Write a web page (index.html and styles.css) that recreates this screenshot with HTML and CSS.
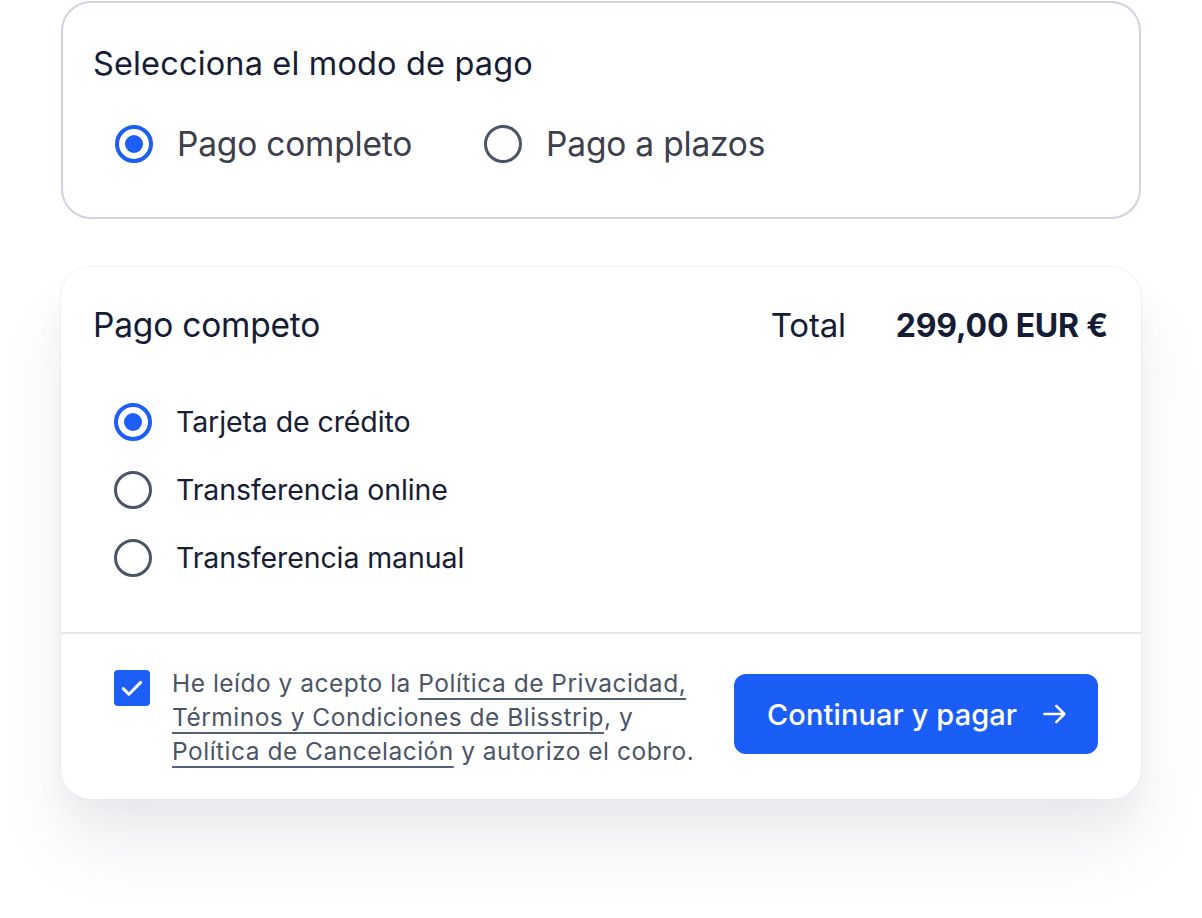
FILE: index.html
```html
<!DOCTYPE html>
<html lang="es">
<head>
<meta charset="utf-8">
<link rel="stylesheet" href="styles.css">
</head>
<body>
<div class="page">
  <section class="mode-card">
    <h2 class="mode-title">Selecciona el modo de pago</h2>
    <div class="mode-options">
      <label class="opt"><span class="radio checked"></span><span class="opt-label">Pago completo</span></label>
      <label class="opt"><span class="radio"></span><span class="opt-label">Pago a plazos</span></label>
    </div>
  </section>

  <section class="pay-card">
    <div class="pay-body">
      <div class="pay-head">
        <span class="pay-title">Pago competo</span>
        <span class="total-label">Total</span>
        <span class="total-amount">299,00 EUR €</span>
      </div>
      <div class="methods">
        <label class="method"><span class="radio checked"></span><span class="method-label">Tarjeta de crédito</span></label>
        <label class="method"><span class="radio"></span><span class="method-label">Transferencia online</span></label>
        <label class="method"><span class="radio"></span><span class="method-label">Transferencia manual</span></label>
      </div>
    </div>
    <div class="pay-foot">
      <div class="consent">
        <span class="checkbox"><svg viewBox="0 0 24 24" width="30" height="30"><path d="M5 12.5l4.5 4.5L19 7.5" fill="none" stroke="#fff" stroke-width="2.4" stroke-linecap="round" stroke-linejoin="round"/></svg></span>
        <p class="consent-text">He leído y acepto la <a>Política de Privacidad,</a><br><a>Términos y Condiciones de Blisstrip</a>, y<br><a>Política de Cancelación</a> y autorizo el cobro.</p>
      </div>
      <button class="pay-btn"><span>Continuar y pagar</span><svg viewBox="0 0 24 24" width="30" height="30"><path d="M3.5 12h16M13 5.5l6.5 6.5-6.5 6.5" fill="none" stroke="#fff" stroke-width="2" stroke-linecap="round" stroke-linejoin="round"/></svg></button>
    </div>
  </section>
</div>
</body>
</html>
```
FILE: styles.css
```css
* { box-sizing: border-box; }
html, body { margin: 0; padding: 0; background: #fff; }
body {
  font-family: "Inter", "Noto Sans", sans-serif;
  color: #141c36;
}
.page {
  width: 1080px;
  margin-left: 61px;
  padding-top: 1px;
  padding-bottom: 120px;
}
.mode-card {
  height: 218px;
  border: 2px solid #cfd3dd;
  border-radius: 30px;
  padding: 41px 30px 0 30px;
}
.mode-title {
  margin: 0;
  font-size: 32.5px;
  font-weight: 400;
  line-height: 40px;
  color: #161d35;
  letter-spacing: 0.15px;
}
.mode-options {
  display: flex;
  gap: 72px;
  margin-top: 40px;
  padding-left: 22px;
}
.opt, .method {
  display: flex;
  align-items: center;
  gap: 24px;
}
.opt-label {
  font-size: 33.5px;
  line-height: 40px;
  color: #3b404c;
  letter-spacing: -0.2px;
}
.radio {
  width: 38px;
  height: 38px;
  border-radius: 50%;
  border: 3.5px solid #4b5567;
  flex: none;
  position: relative;
}
.radio.checked {
  border: 4px solid #1c5ef6;
}
.radio.checked::after {
  content: "";
  position: absolute;
  left: 50%; top: 50%;
  width: 18px; height: 18px;
  margin: -9px 0 0 -9px;
  border-radius: 50%;
  background: #1c5ef6;
}
.pay-card {
  margin-top: 48px;
  border-radius: 30px;
  background: #fff;
  box-shadow: 0 0 0 1px rgba(226,229,236,0.45), 0 50px 70px rgba(30,40,70,0.07), 0 20px 30px rgba(30,40,70,0.04);
}
.pay-body {
  padding: 37px 33px 0 32px;
  border-bottom: 2px solid #e5e7ec;
}
.pay-head {
  display: flex;
  align-items: center;
  height: 42px;
}
.pay-title {
  font-size: 33.5px;
  color: #141c36;
  flex: 1;
  letter-spacing: -0.2px;
}
.total-label {
  font-size: 33px;
  color: #141c36;
  margin-right: 50px;
  letter-spacing: -0.2px;
}
.total-amount {
  font-size: 32px;
  font-weight: 700;
  color: #141c36;
  letter-spacing: -0.2px;
}
.methods {
  display: flex;
  flex-direction: column;
  gap: 30px;
  padding: 57px 0 55px 21px;
}
.method-label {
  font-size: 28.5px;
  line-height: 38px;
  color: #161d35;
  letter-spacing: -0.1px;
}
.pay-foot {
  display: flex;
  align-items: flex-start;
  justify-content: space-between;
  padding: 35px 43px 31px 53px;
}
.consent {
  display: flex;
  gap: 22px;
}
.checkbox {
  width: 36px;
  height: 36px;
  margin-top: 1px;
  border-radius: 4px;
  background: #1c5ef6;
  display: flex;
  align-items: center;
  justify-content: center;
  flex: none;
}
.consent-text {
  margin: -3px 0 0 0;
  font-size: 24.5px;
  line-height: 34px;
  color: #4b5568;
  letter-spacing: 0.5px;
}
.consent-text a {
  text-decoration: underline;
  text-decoration-thickness: 1.5px;
  text-underline-offset: 6px;
  text-decoration-color: #556079;
}
.pay-btn {
  margin-top: 5px;
  width: 364px;
  height: 80px;
  border: none;
  border-radius: 12px;
  background: #1b5ef7;
  color: #fff;
  font-family: inherit;
  font-size: 29px;
  font-weight: 500;
  letter-spacing: 0.1px;
  display: flex;
  align-items: center;
  justify-content: space-between;
  padding: 0 28px 0 33px;
}
```
